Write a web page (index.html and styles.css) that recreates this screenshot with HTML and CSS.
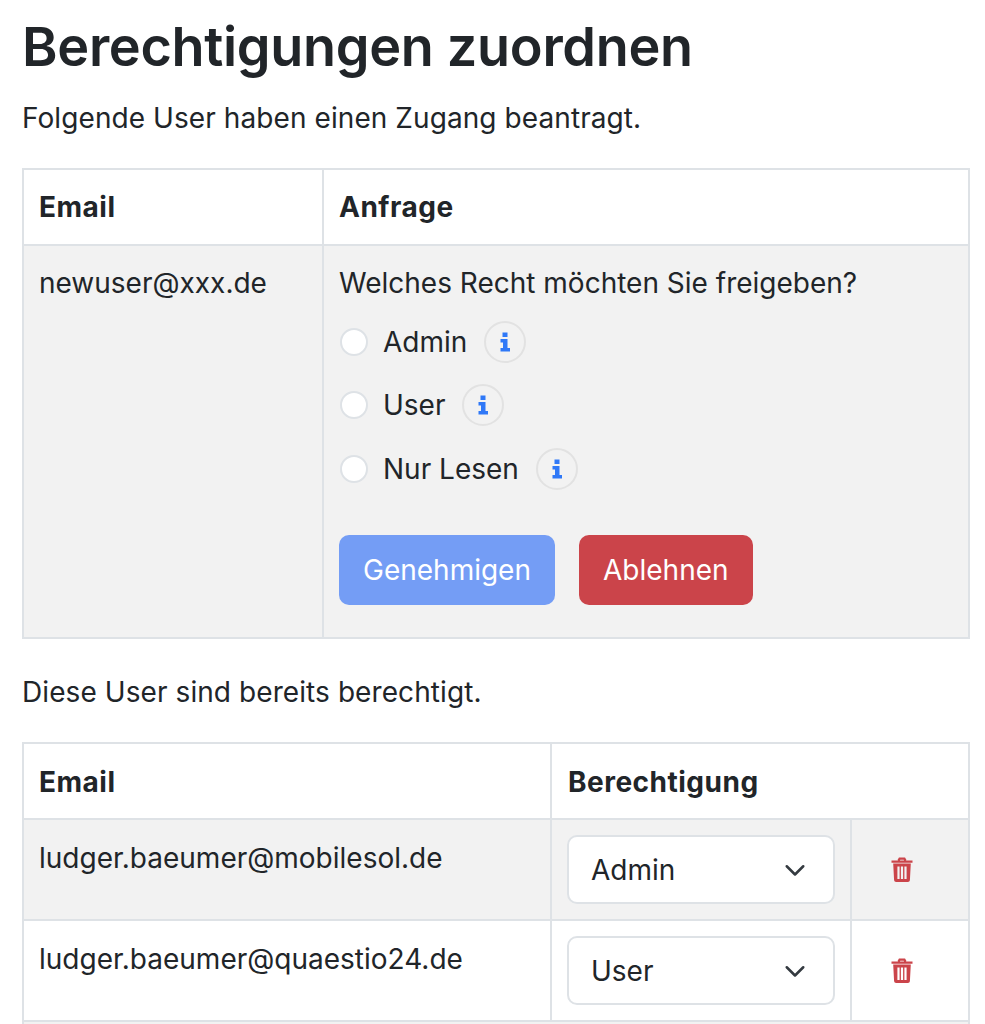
FILE: index.html
```html
<!DOCTYPE html>
<html lang="de">
<head>
    <meta charset="UTF-8">
    <meta name="viewport" content="width=device-width, initial-scale=1.0">
    <title>Berechtigungen zuordnen</title>
    <link rel="stylesheet" href="styles.css">
</head>
<body>

    <h1>Berechtigungen zuordnen</h1>
    <p class="intro">Folgende User haben einen Zugang beantragt.</p>

    <table class="user-table request-table">
        <thead>
            <tr>
                <th class="col-request-email">Email</th>
                <th>Anfrage</th>
            </tr>
        </thead>
        <tbody>
            <tr class="striped">
                <td>newuser@xxx.de</td>
                <td>
                    <div class="question">Welches Recht möchten Sie freigeben?</div>
                    <label class="radio-row">
                        <input type="radio" name="recht">
                        <span>Admin</span>
                        <span class="info-badge">
                            <svg viewBox="0 0 10 20" width="10" height="20"><path d="M2.500 0.500h5v4.500h-5zM0.500 7h7v9h2.500v3.500H0.500V16h2.500v-5.500H0.500z"/></svg>
                        </span>
                    </label>
                    <label class="radio-row">
                        <input type="radio" name="recht">
                        <span>User</span>
                        <span class="info-badge">
                            <svg viewBox="0 0 10 20" width="10" height="20"><path d="M2.500 0.500h5v4.500h-5zM0.500 7h7v9h2.500v3.500H0.500V16h2.500v-5.500H0.500z"/></svg>
                        </span>
                    </label>
                    <label class="radio-row">
                        <input type="radio" name="recht">
                        <span>Nur Lesen</span>
                        <span class="info-badge">
                            <svg viewBox="0 0 10 20" width="10" height="20"><path d="M2.500 0.500h5v4.500h-5zM0.500 7h7v9h2.500v3.500H0.500V16h2.500v-5.500H0.500z"/></svg>
                        </span>
                    </label>
                    <div class="button-row">
                        <button type="button" class="btn btn-approve">Genehmigen</button>
                        <button type="button" class="btn btn-reject">Ablehnen</button>
                    </div>
                </td>
            </tr>
        </tbody>
    </table>

    <p class="intro second">Diese User sind bereits berechtigt.</p>

    <table class="user-table rights-table">
        <thead>
            <tr>
                <th class="col-email">Email</th>
                <th class="col-select">Berechtigung</th>
                <th class="col-delete"></th>
            </tr>
        </thead>
        <tbody>
            <tr class="striped">
                <td>ludger.baeumer@mobilesol.de</td>
                <td class="col-select">
                    <div class="fake-select">
                        <span>Admin</span>
                        <svg viewBox="0 0 16 16" width="24" height="24"><path d="M2.500 5.500 8 11l5.500-5.500" fill="none" stroke="#343a40" stroke-width="1.700" stroke-linecap="round" stroke-linejoin="round"/></svg>
                    </div>
                </td>
                <td class="col-delete">
                    <svg class="trash" viewBox="0 0 24 26" width="24" height="26"><path d="M8.500 3.600 9.600 1.600h4.800l1.100 2M1.500 4.600h21" fill="none" stroke="#cb444a" stroke-width="2.200"/><path d="M3.200 6.600h17.600l-.9 16.600a2 2 0 0 1-2 1.800H6.100a2 2 0 0 1-2-1.800zM7.400 9.500v12.500h2.200V9.500zM10.900 9.500v12.500h2.200V9.500zM14.400 9.500v12.500h2.200V9.500z" fill="#cb444a" fill-rule="evenodd"/></svg>
                </td>
            </tr>
            <tr>
                <td>ludger.baeumer@quaestio24.de</td>
                <td class="col-select">
                    <div class="fake-select">
                        <span>User</span>
                        <svg viewBox="0 0 16 16" width="24" height="24"><path d="M2.500 5.500 8 11l5.500-5.500" fill="none" stroke="#343a40" stroke-width="1.700" stroke-linecap="round" stroke-linejoin="round"/></svg>
                    </div>
                </td>
                <td class="col-delete">
                    <svg class="trash" viewBox="0 0 24 26" width="24" height="26"><path d="M8.500 3.600 9.600 1.600h4.800l1.100 2M1.500 4.600h21" fill="none" stroke="#cb444a" stroke-width="2.200"/><path d="M3.200 6.600h17.600l-.9 16.600a2 2 0 0 1-2 1.800H6.100a2 2 0 0 1-2-1.800zM7.400 9.500v12.500h2.200V9.500zM10.900 9.500v12.500h2.200V9.500zM14.400 9.500v12.500h2.200V9.500z" fill="#cb444a" fill-rule="evenodd"/></svg>
                </td>
            </tr>
            <tr class="striped">
                <td colspan="3" class="row-cut"></td>
            </tr>
        </tbody>
    </table>

</body>
</html>
```

FILE: styles.css
```css
/* General Styles */
html {
    height: 100%;
    overflow: hidden;
}

body {
    margin: 0;
    padding: 0 15px 0 22px;
    font-family: Inter, "Liberation Sans", sans-serif;
    font-size: 28px;
    line-height: 40px;
    color: #212529;
    background: white;
}

h1 {
    margin: 0;
    padding-top: 14px;
    font-size: 54px;
    font-weight: 600;
    line-height: 66px;
    letter-spacing: -0.32px;
}

.intro {
    margin: 18px 0 30px;
    letter-spacing: 0.08px;
}

.intro.second {
    margin: 33px 0 30px;
}

/* Tables */
.user-table {
    width: 948px;
    table-layout: fixed;
    border-collapse: collapse;
    border: 2px solid #dee2e6;
}

.user-table th,
.user-table td {
    box-sizing: border-box;
    padding: 17px 15px 16px;
    border: 2px solid #dee2e6;
    text-align: left;
    vertical-align: top;
}

.rights-table td {
    padding-top: 18px;
}

.user-table th {
    padding: 17px 15px;
    font-weight: 700;
    letter-spacing: 0.5px;
}

.rights-table th {
    padding: 18px 15px 16px;
}

.striped td {
    background: #f2f2f2;
}

.col-request-email {
    width: 300px;
}

.col-email {
    width: 528px;
}

.user-table .col-select {
    width: 300px;
    border-right: 2px solid #dee2e6;
}

.user-table td.col-select {
    padding: 15px;
}

.user-table th.col-select {
    padding-left: 16px;
    border-right: none;
}

.user-table th.col-delete {
    border-left: none;
}

.user-table td.col-delete {
    padding: 0 0 0 38px;
    vertical-align: middle;
}

.trash {
    display: block;
}

/* Radios with info badge */
.question {
    margin-bottom: 7px;
}

.radio-row {
    display: flex;
    align-items: center;
    height: 63.500px;
}

.radio-row input {
    appearance: none;
    width: 28px;
    height: 28px;
    margin: 0 15px 0 1px;
    border: 2px solid #dee2e6;
    border-radius: 50%;
    background: white;
}

.info-badge {
    display: flex;
    align-items: center;
    justify-content: center;
    box-sizing: border-box;
    width: 42px;
    height: 42px;
    margin-left: 17px;
    border: 2px solid #e2e2e2;
    border-radius: 50%;
}

.info-badge svg {
    fill: #2f78f7;
}

/* Buttons */
.button-row {
    display: flex;
    gap: 24px;
    margin: 34.500px 0 16px;
}

.btn {
    height: 70px;
    padding: 0 24px;
    border: none;
    border-radius: 10px;
    font-family: inherit;
    font-size: 28px;
    color: white;
}

.btn-approve {
    background: #749df5;
}

.btn-reject {
    background: #cb444a;
}

/* Select look */
.fake-select {
    display: flex;
    align-items: center;
    justify-content: space-between;
    box-sizing: border-box;
    height: 69px;
    padding: 0 26px 0 22px;
    border: 2px solid #dee2e6;
    border-radius: 10px;
    background: white;
}

.row-cut {
    height: 40px;
}
```
